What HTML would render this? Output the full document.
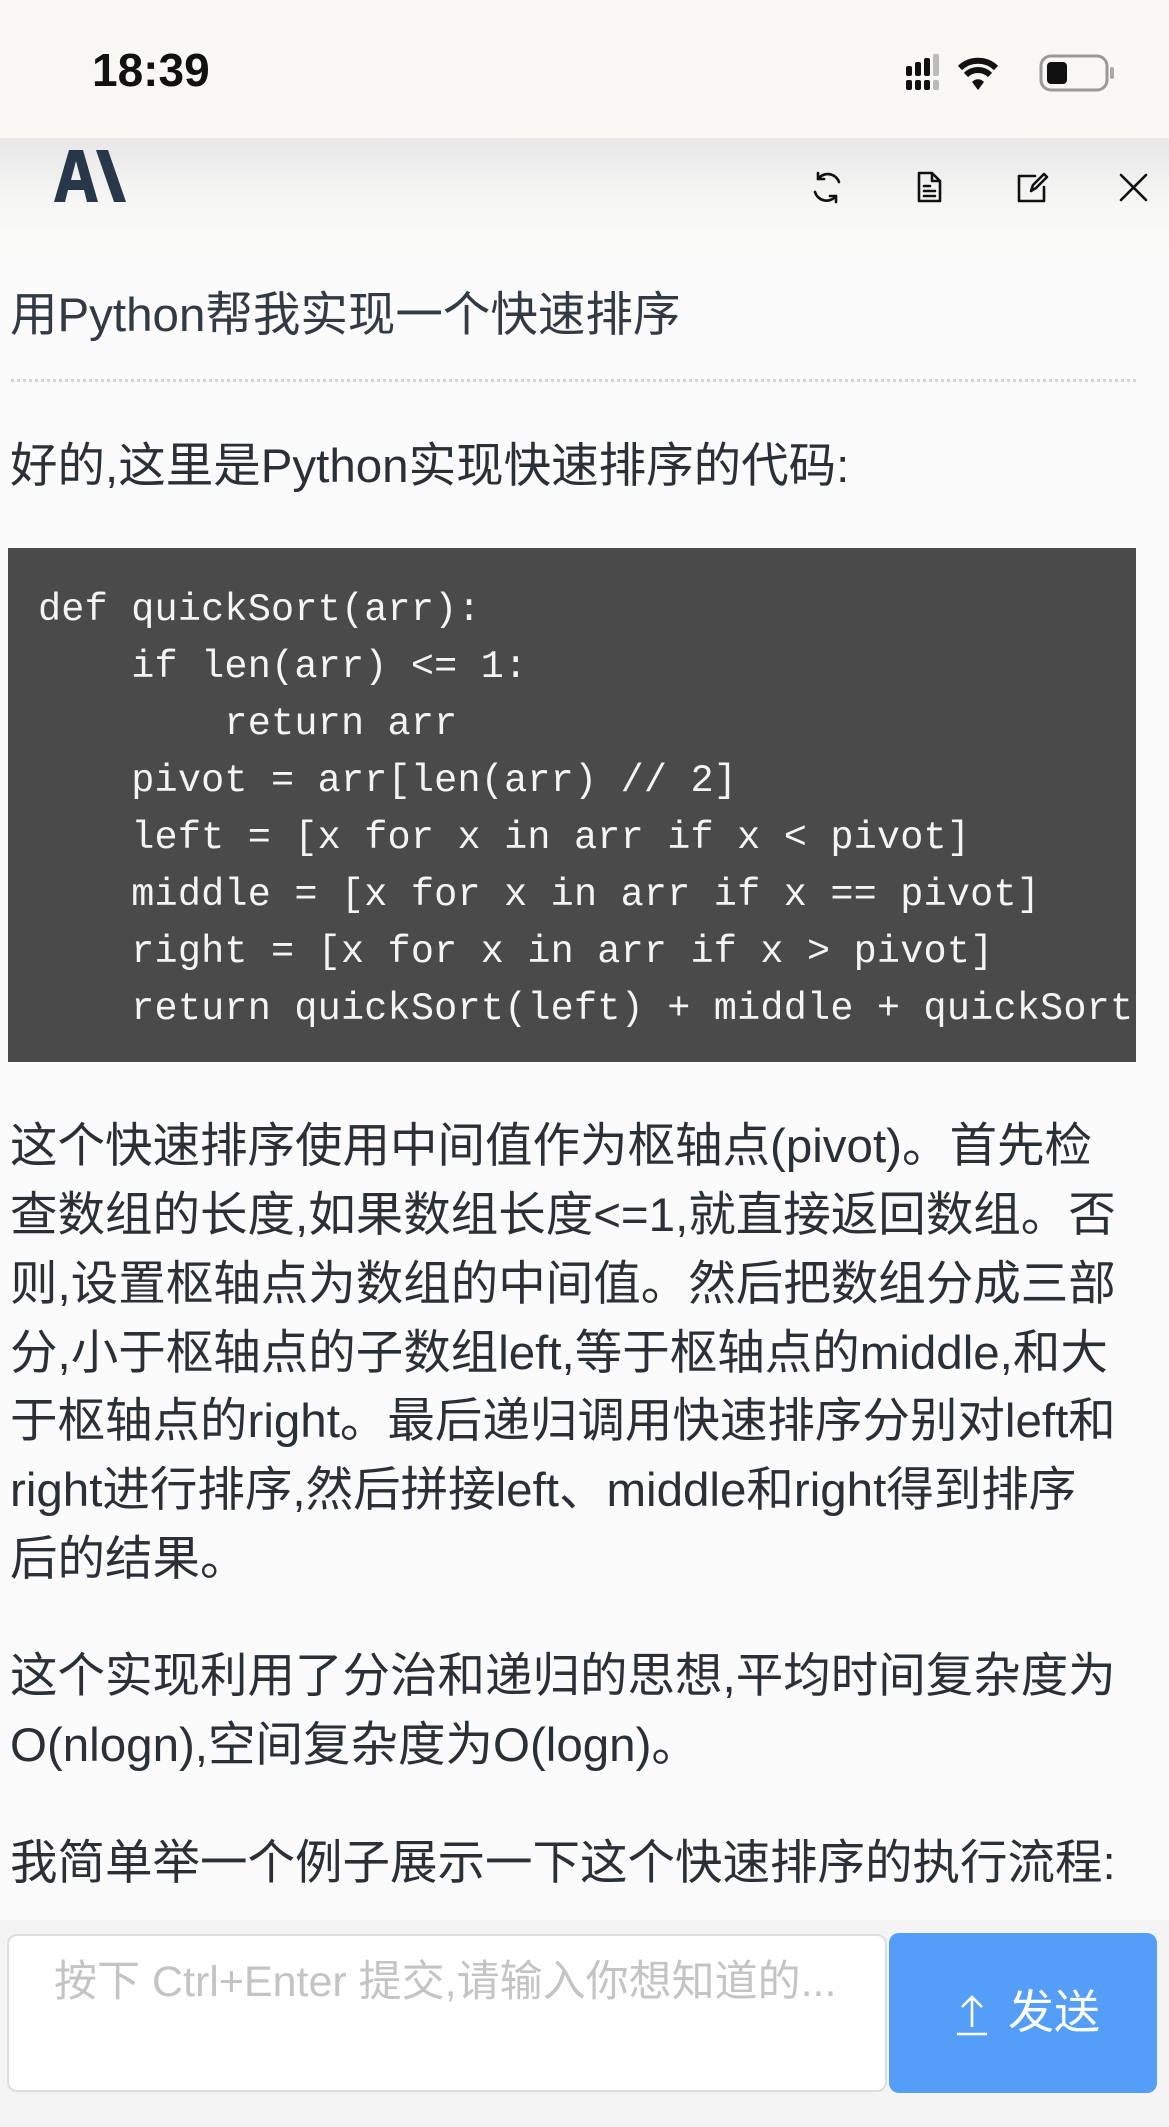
<!DOCTYPE html>
<html><head><meta charset="utf-8"><style>
*{margin:0;padding:0;box-sizing:border-box}
body{width:1169px;height:2127px;background:#fbfbfc;position:relative;overflow:hidden;font-family:"Liberation Sans","Noto Sans CJK SC",sans-serif;color:#2b2f36}
.abs{position:absolute;white-space:nowrap}
.status{position:absolute;left:0;top:0;width:1169px;height:138px;background:#f9f8f4}
.hdr{position:absolute;left:0;top:138px;width:1169px;height:110px;background:linear-gradient(#e6e7e6,#f7f7f6 60%,#fafaf9)}
.t{font-size:47.5px;line-height:69px}
.code{position:absolute;left:8px;top:548px;width:1128px;height:514px;background:#4a4a4a;overflow:hidden}
.code pre{position:absolute;left:30px;top:34px;font-family:"Liberation Mono",monospace;font-size:38.5px;line-height:57px;color:#f4f4f4;letter-spacing:0.2px}
</style></head><body>
<div class="status"></div>
<div class="abs" style="left:92px;top:45px;font-size:46px;font-weight:bold;color:#111;line-height:50px">18:39</div>
<svg class="abs" style="left:900px;top:52px" width="220" height="44" viewBox="0 0 220 44">
<g fill="#111"><rect x="6" y="14" width="6" height="10" rx="2"/><rect x="6" y="28" width="6" height="10" rx="2"/>
<rect x="15" y="10" width="6" height="14" rx="2"/><rect x="15" y="28" width="6" height="10" rx="2"/>
<rect x="24" y="6" width="6" height="18" rx="2"/><rect x="24" y="28" width="6" height="10" rx="2"/></g>
<g fill="#bbb"><rect x="33" y="2" width="6" height="22" rx="2"/><rect x="33" y="28" width="6" height="10" rx="2"/></g>
<path d="M60 16 A26 26 0 0 1 96 16" stroke="#111" stroke-width="6" fill="none"/>
<path d="M66 23 A17 17 0 0 1 90 23" stroke="#111" stroke-width="6" fill="none"/>
<path d="M72 30 L78 38 L84 30 A8 8 0 0 0 72 30Z" fill="#111"/>
<rect x="141" y="4" width="66" height="34" rx="10" fill="none" stroke="#999" stroke-width="3"/>
<rect x="147" y="10" width="20" height="22" rx="4" fill="#111"/>
<rect x="210" y="15" width="4" height="12" rx="2" fill="#aaa"/></svg>
<div class="hdr"></div>
<svg class="abs" style="left:52px;top:148px" width="74" height="56" viewBox="0 0 74 56">
<path d="M2 54 L17 2 H31 L46 54 H35 L32 42 H16 L13 54Z M19 32 H29 L24 13Z" fill="#29374a"/>
<path d="M44 2 H56 L74 54 H62Z" fill="#29374a"/></svg>
<svg class="abs" style="left:811px;top:170px" width="340" height="34" viewBox="0 0 340 34" fill="none" stroke="#111" stroke-width="2.6" stroke-linecap="round" stroke-linejoin="round">
<path d="M28 12 A12 12 0 0 0 7 9 M4 22 A12 12 0 0 0 25 26"/><path d="M7 3 V9 H13 M25 32 V26 H19"/>
<path d="M108 3 H121 L129 11 V31 H108Z M121 3 V11 H129 M113 16 H119 M113 21 H124 M113 26 H124"/>
<path d="M224 6 H208 V31 H233 V17 M220 21 L222 15 L233 4 L236 7 L225 18Z"/>
<path d="M310 5 L335 30 M335 5 L310 30"/></svg>
<div class="abs t" style="left:10px;top:281px;color:#333a44">用Python帮我实现一个快速排序</div>
<div class="abs" style="left:11px;top:379px;width:1125px;border-top:3px dotted #d4d4d6"></div>
<div class="abs t" style="left:10px;top:432px">好的,这里是Python实现快速排序的代码:</div>
<div class="code"><pre>def quickSort(arr):
    if len(arr) &lt;= 1:
        return arr
    pivot = arr[len(arr) // 2]
    left = [x for x in arr if x &lt; pivot]
    middle = [x for x in arr if x == pivot]
    right = [x for x in arr if x &gt; pivot]
    return quickSort(left) + middle + quickSort(right)</pre></div>
<div class="abs t" style="left:10px;top:1112px">这个快速排序使用中间值作为枢轴点(pivot)。首先检</div>
<div class="abs t" style="left:10px;top:1181px">查数组的长度,如果数组长度&lt;=1,就直接返回数组。否</div>
<div class="abs t" style="left:10px;top:1250px">则,设置枢轴点为数组的中间值。然后把数组分成三部</div>
<div class="abs t" style="left:10px;top:1319px">分,小于枢轴点的子数组left,等于枢轴点的middle,和大</div>
<div class="abs t" style="left:10px;top:1387px">于枢轴点的right。最后递归调用快速排序分别对left和</div>
<div class="abs t" style="left:10px;top:1456px">right进行排序,然后拼接left、middle和right得到排序</div>
<div class="abs t" style="left:10px;top:1525px">后的结果。</div>
<div class="abs t" style="left:10px;top:1642px">这个实现利用了分治和递归的思想,平均时间复杂度为</div>
<div class="abs t" style="left:10px;top:1711px">O(nlogn),空间复杂度为O(logn)。</div>
<div class="abs t" style="left:10px;top:1829px">我简单举一个例子展示一下这个快速排序的执行流程:</div>
<div class="abs" style="left:0;top:1920px;width:1169px;height:207px;background:#f4f4f5"></div>
<div class="abs" style="left:7px;top:1934px;width:880px;height:158px;background:#fff;border:2px solid #ddd;border-radius:10px"></div>
<div class="abs" style="left:54px;top:1955px;font-size:43px;line-height:54px;color:#c4c4c6">按下 Ctrl+Enter 提交,请输入你想知道的...</div>
<div class="abs" style="left:889px;top:1933px;width:268px;height:160px;background:#559ef8;border-radius:10px"></div>
<svg class="abs" style="left:955px;top:1993px" width="34" height="44" viewBox="0 0 34 44" fill="none" stroke="#fff" stroke-width="2.6">
<path d="M17 34 V4 M7 14 L17 4 L27 14 M2 41 H32"/></svg>
<div class="abs" style="left:1008px;top:1984px;font-size:46px;line-height:56px;color:#fff">发送</div>
</body></html>
